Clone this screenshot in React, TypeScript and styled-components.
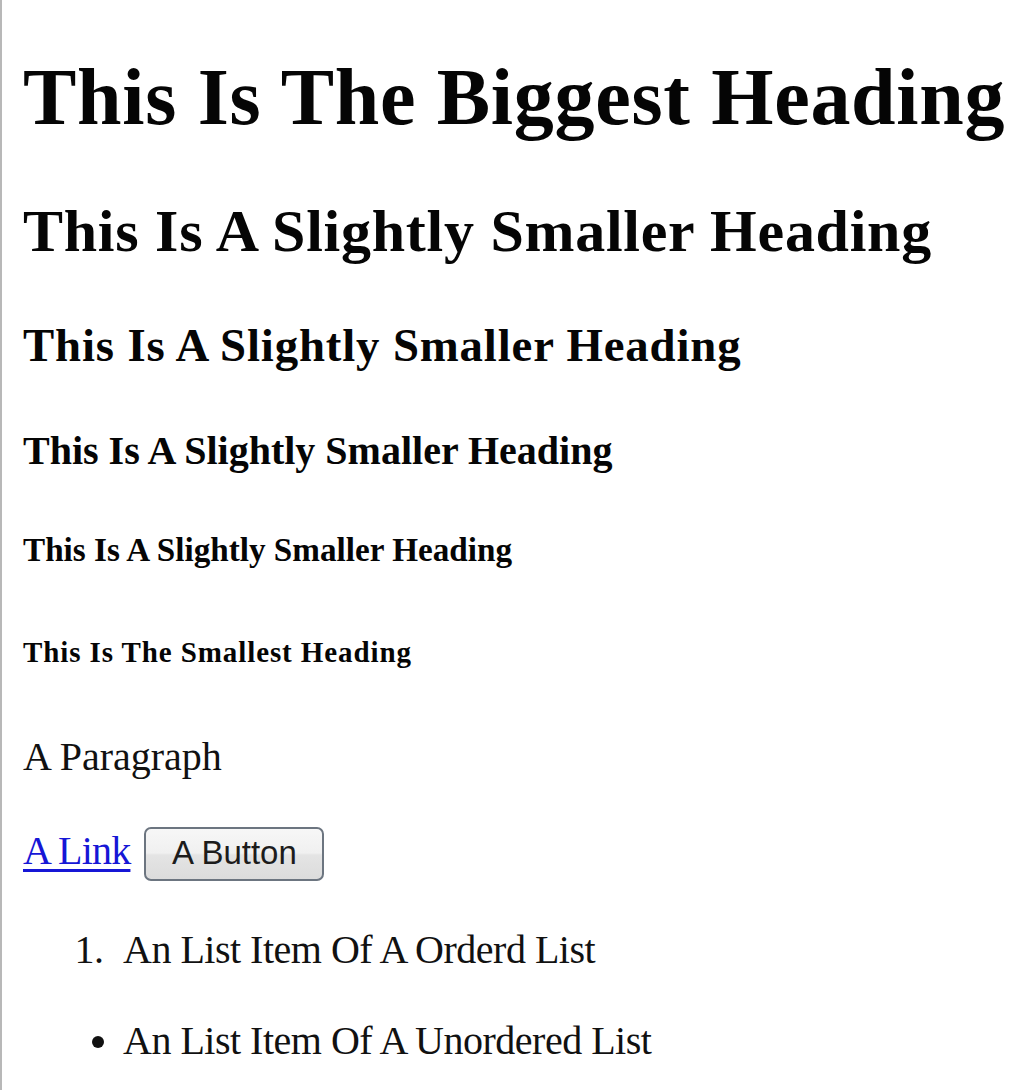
import React from "react";
import styled, { createGlobalStyle } from "styled-components";

const Global = createGlobalStyle`
  html, body {
    margin: 0;
    padding: 0;
    background: #ffffff;
  }
  body {
    font-family: "Liberation Serif", "Times New Roman", serif;
    font-size: 40px;
    color: #000000;
  }
`;

const Frame = styled.div`
  display: flow-root;
  box-sizing: border-box;
  min-height: 1090px;
  border-left: 2px solid #b8b8b8;
  padding: 0 21px;
`;

const Heading = styled.h1<{ $size: number; $top: number; $track: number }>`
  font-family: "Liberation Serif", "Times New Roman", serif;
  font-weight: bold;
  font-size: ${(p) => p.$size}px;
  letter-spacing: ${(p) => p.$track}px;
  margin: ${(p) => p.$top}px 0 0;
  line-height: normal;
  white-space: nowrap;
  color: #050505;
`;

const Paragraph = styled.p<{ $top: number }>`
  margin: ${(p) => p.$top}px 0 0;
  line-height: normal;
  color: #111111;
`;

const Link = styled.a`
  color: #1616d6;
  letter-spacing: -0.8px;
  text-decoration: underline;
  text-decoration-thickness: 3px;
  text-underline-offset: 5px;
`;

const Button = styled.button`
  font-family: "Liberation Sans", Arial, sans-serif;
  font-size: 33px;
  line-height: normal;
  color: #1c1c1c;
  width: 180px;
  height: 54px;
  padding: 5px 0 7px;
  margin: -4px 0 -7px 4px;
  border: 2px solid #6c7580;
  border-radius: 7px;
  background: linear-gradient(#f7f7f7 0%, #f0f0f0 48%, #e4e4e4 52%, #dcdcdc 100%);
  vertical-align: baseline;
`;

const Ordered = styled.ol<{ $top: number }>`
  margin: ${(p) => p.$top}px 0 0;
  padding-left: 100px;
  line-height: normal;
  color: #111111;

  li::marker {
    content: counter(list-item) ".\\2002";
  }
`;

const Unordered = styled.ul<{ $top: number }>`
  margin: ${(p) => p.$top}px 0 0;
  padding-left: 100px;
  line-height: normal;
  color: #111111;
`;

const Item = styled.li`
  letter-spacing: -0.5px;
`;

export default function App() {
  return (
    <>
      <Global />
      <Frame>
        <Heading as="h1" $size={80} $top={52} $track={0.7}>This Is The Biggest Heading</Heading>
        <Heading as="h2" $size={60} $top={54} $track={0.73}>This Is A Slightly Smaller Heading</Heading>
        <Heading as="h3" $size={46.8} $top={52} $track={0.85}>This Is A Slightly Smaller Heading</Heading>
        <Heading as="h4" $size={40} $top={55} $track={0}>This Is A Slightly Smaller Heading</Heading>
        <Heading as="h5" $size={33.2} $top={57} $track={0}>This Is A Slightly Smaller Heading</Heading>
        <Heading as="h6" $size={29} $top={67} $track={0.9}>This Is The Smallest Heading</Heading>
        <Paragraph $top={64}>A Paragraph</Paragraph>
        <Paragraph $top={47}>
          <Link href="#">A Link</Link> <Button type="button">A Button</Button>
        </Paragraph>
        <Ordered $top={52}>
          <Item>An List Item Of A Orderd List</Item>
        </Ordered>
        <Unordered $top={44}>
          <Item>An List Item Of A Unordered List</Item>
        </Unordered>
      </Frame>
    </>
  );
}
